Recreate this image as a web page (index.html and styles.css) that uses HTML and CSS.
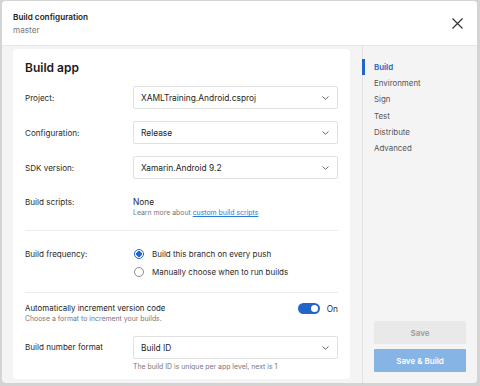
FILE: index.html
```html
<!DOCTYPE html>
<html lang="en">
<head>
<meta charset="utf-8">
<title>Build configuration</title>
<link rel="stylesheet" href="styles.css">
</head>
<body>
<div class="dialog">
  <header class="header">
    <div class="titles">
      <div class="title">Build configuration</div>
      <div class="subtitle">master</div>
    </div>
    <button class="close" aria-label="Close">
      <svg width="11" height="11" viewBox="0 0 11 11"><path d="M0.5 0.5 L10.5 10.5 M10.5 0.5 L0.5 10.5" stroke="#333" stroke-width="1.2" fill="none"/></svg>
    </button>
  </header>
  <div class="body">
    <main class="main">
      <section class="card">
        <h1 class="card-title">Build app</h1>
        <div class="row">
          <div class="label">Project:</div>
          <div class="select"><span>XAMLTraining.Android.csproj</span><svg class="chev" width="7" height="4" viewBox="0 0 7 4"><path d="M0.5 0.5 L3.5 3.3 L6.5 0.5" stroke="#555" stroke-width="0.9" fill="none"/></svg></div>
        </div>
        <div class="row">
          <div class="label">Configuration:</div>
          <div class="select"><span>Release</span><svg class="chev" width="7" height="4" viewBox="0 0 7 4"><path d="M0.5 0.5 L3.5 3.3 L6.5 0.5" stroke="#555" stroke-width="0.9" fill="none"/></svg></div>
        </div>
        <div class="row">
          <div class="label">SDK version:</div>
          <div class="select"><span>Xamarin.Android 9.2</span><svg class="chev" width="7" height="4" viewBox="0 0 7 4"><path d="M0.5 0.5 L3.5 3.3 L6.5 0.5" stroke="#555" stroke-width="0.9" fill="none"/></svg></div>
        </div>
        <div class="row row-text">
          <div class="label">Build scripts:</div>
          <div>
            <div class="value">None</div>
            <div class="help">Learn more about <a href="#" class="link">custom build scripts</a></div>
          </div>
        </div>
        <hr class="divider">
        <div class="row row-radio">
          <div class="label">Build frequency:</div>
          <div class="radios">
            <div class="radio-item"><span class="radio checked"></span>Build this branch on every push</div>
            <div class="radio-item"><span class="radio"></span>Manually choose when to run builds</div>
          </div>
        </div>
        <hr class="divider divider-2">
        <div class="toggle-row">
          <div>
            <div class="toggle-title">Automatically increment version code</div>
            <div class="help">Choose a format to increment your builds.</div>
          </div>
          <div class="toggle-wrap"><span class="toggle"><span class="knob"></span></span><span class="toggle-text">On</span></div>
        </div>
        <div class="row row-last">
          <div class="label">Build number format</div>
          <div>
            <div class="select"><span>Build ID</span><svg class="chev" width="7" height="4" viewBox="0 0 7 4"><path d="M0.5 0.5 L3.5 3.3 L6.5 0.5" stroke="#555" stroke-width="0.9" fill="none"/></svg></div>
            <div class="help help-below">The build ID is unique per app level, next is 1</div>
          </div>
        </div>
      </section>
    </main>
    <aside class="sidebar">
      <nav class="nav">
        <a class="nav-item active" href="#">Build</a>
        <a class="nav-item" href="#">Environment</a>
        <a class="nav-item" href="#">Sign</a>
        <a class="nav-item" href="#">Test</a>
        <a class="nav-item" href="#">Distribute</a>
        <a class="nav-item" href="#">Advanced</a>
      </nav>
      <div class="buttons">
        <button class="btn btn-save">Save</button>
        <button class="btn btn-primary">Save &amp; Build</button>
      </div>
    </aside>
  </div>
</div>
</body>
</html>
```

FILE: styles.css
```css
* { box-sizing: border-box; }
html, body { margin: 0; padding: 0; }
body {
  background: #d4d4d4;
  font-family: Inter, "Liberation Sans", sans-serif;
  color: #2a2a2a;
  width: 480px;
  height: 386px;
  overflow: hidden;
}
.dialog {
  margin: 1px 3px 0 2px;
  height: 382px;
  background: #f4f4f4;
  border-radius: 4px;
  overflow: hidden;
  display: flex;
  flex-direction: column;
}
.header {
  height: 45px;
  flex: none;
  background: #fff;
  border-bottom: 1px solid #e8e8e8;
  display: flex;
  align-items: center;
  justify-content: space-between;
  padding: 0 14px 0 11px;
}
.titles { padding-top: 1px; }
.title { font-size: 8.2px; font-weight: 600; line-height: 12px; color: #1e1e1e; }
.subtitle { font-size: 8.2px; line-height: 12px; color: #777; margin-top: 1px; }
.close {
  border: 0; background: none; padding: 0; width: 12px; height: 12px;
  display: flex; align-items: center; justify-content: center;
}
.body { flex: 1; display: flex; min-height: 0; }
.main { width: 360px; padding: 3px 12px 4px 11px; }
.card {
  background: #fff;
  border-radius: 3px;
  height: 100%;
  padding: 11px 12px 0 12px;
  box-shadow: 0 0 1px rgba(0,0,0,0.06);
}
.card-title {
  margin: 0 0 10px;
  font-size: 12px;
  line-height: 16px;
  font-weight: 600;
  color: #1a1a1a;
}
.row {
  display: grid;
  grid-template-columns: 108px 1fr;
  align-items: center;
  margin-bottom: 12px;
}
.label { font-size: 8.1px; color: #2a2a2a; line-height: 12px; }
.select {
  height: 23px;
  border: 1px solid #e1e1e1;
  border-radius: 2px;
  background: #fff;
  display: flex;
  align-items: center;
  justify-content: space-between;
  padding: 0 8px 0 7px;
  font-size: 8.4px;
  color: #1e1e1e;
}
.chev { display: block; }
.row-text { align-items: start; padding-top: 5px; margin-bottom: 12px; }
.value { font-size: 8.3px; line-height: 12px; color: #1e1e1e; }
.help { font-size: 6.9px; line-height: 10px; color: #777; }
.link { color: #2a78d6; text-decoration: underline; }
.divider { border: 0; border-top: 1px solid #ececec; margin: 0 0 14px; }
.divider-2 { margin-bottom: 9px; }
.row-radio { align-items: start; margin-bottom: 11px; }
.row-radio .label { line-height: 18px; }
.radio-item {
  display: flex; align-items: center; height: 18px;
  font-size: 8px; color: #2a2a2a;
}
.radio {
  width: 10px; height: 10px; border-radius: 50%;
  border: 1px solid #8a8a8a;
  margin: 0 8px 0 1px;
  flex: none;
  background: #fff;
}
.radio.checked {
  border: 1.3px solid #2266c8;
  background: radial-gradient(circle, #2266c8 0 2.6px, #fff 3px);
}
.toggle-row {
  display: flex;
  justify-content: space-between;
  align-items: flex-start;
  margin-bottom: 12px;
}
.toggle-title { font-size: 7.9px; line-height: 12px; color: #222; }
.toggle-wrap { display: flex; align-items: center; gap: 7px; padding-top: 1px; }
.toggle {
  width: 22px; height: 11px; border-radius: 6px;
  background: #2266c8;
  display: flex; align-items: center; justify-content: flex-end;
  padding-right: 2px;
}
.knob { width: 7px; height: 7px; border-radius: 50%; background: #fff; }
.toggle-text { font-size: 8.3px; color: #2a2a2a; }
.row-last { align-items: start; margin-bottom: 0; }
.row-last .label { line-height: 23px; }
.help-below { margin-top: 3px; }
.sidebar {
  flex: 1;
  border-left: 1px solid #e2e2e2;
  background: #f4f4f4;
  display: flex;
  flex-direction: column;
  justify-content: space-between;
  padding: 13px 11px 11px 0;
}
.nav { display: flex; flex-direction: column; }
.nav-item {
  display: block;
  height: 16.2px;
  line-height: 16.2px;
  padding-left: 9px;
  font-size: 7.9px;
  color: #555;
  text-decoration: none;
  border-left: 3px solid transparent;
  margin-left: -1px;
}
.nav-item.active { color: #2266c8; font-weight: 600; border-left-color: #2266c8; }
.buttons { display: flex; flex-direction: column; gap: 5px; padding-left: 11px; }
.btn {
  height: 23px; border: 0; border-radius: 1px;
  font-family: inherit; font-size: 8px; font-weight: 600;
}
.btn-save { background: #e9e9e9; color: #9a9a9a; }
.btn-primary { background: #86b4e4; color: #fff; }
```
